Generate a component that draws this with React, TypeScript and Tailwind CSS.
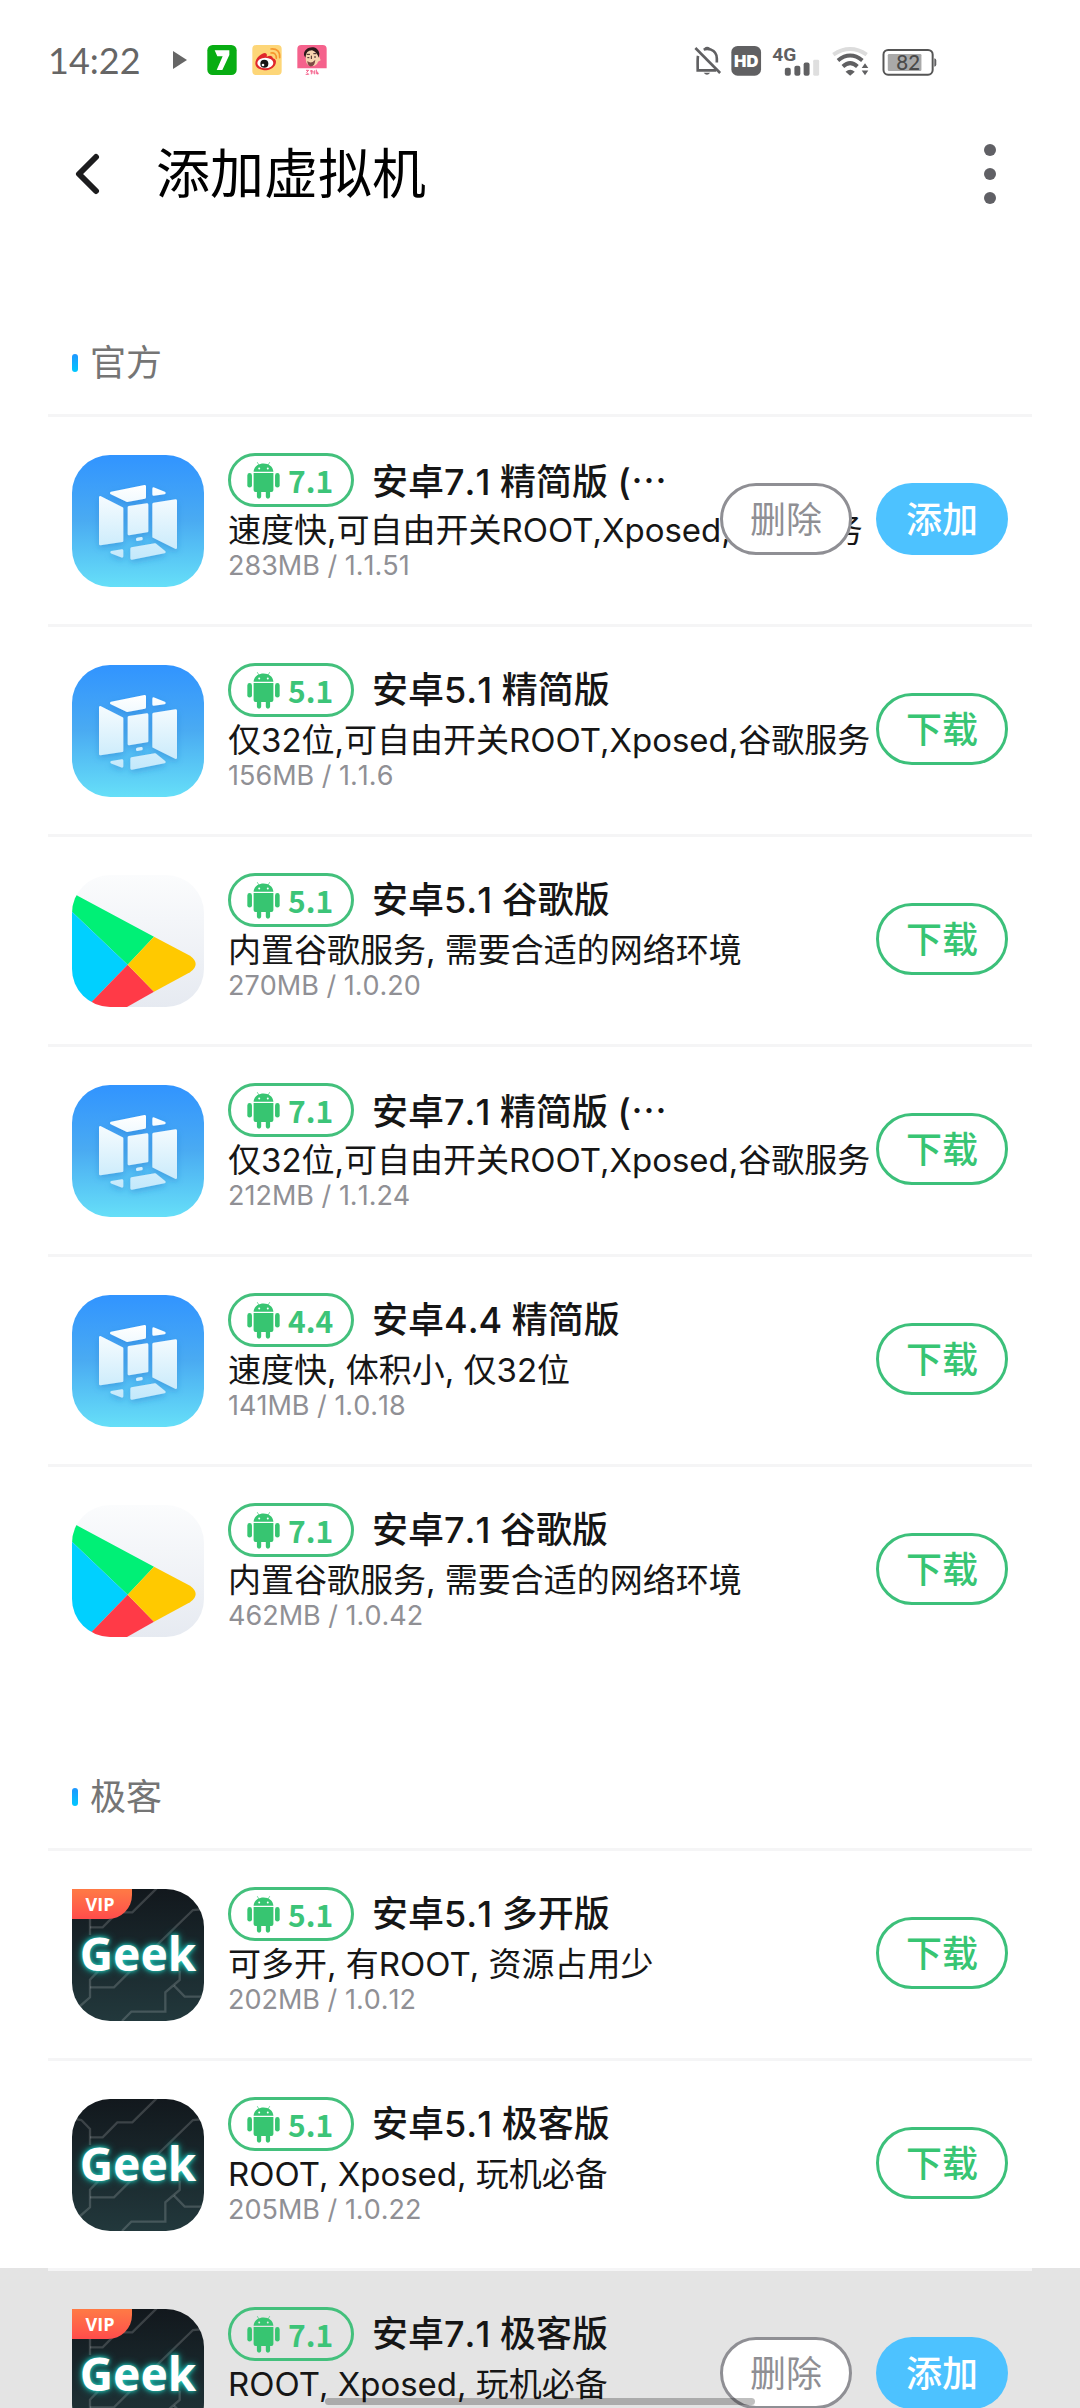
import React from "react";

type IconKind = "cube" | "play" | "geek" | "geekVip";

interface Image {
  icon: IconKind;
  version: string;
  title: string;
  clipped?: boolean;
  desc: string;
  meta?: string;
  installed?: boolean;
  pressed?: boolean;
}

const official: Image[] = [
  { icon: "cube", version: "7.1", title: "安卓7.1 精简版 (", clipped: true, desc: "速度快,可自由开关ROOT,Xposed,谷歌服务", meta: "283MB / 1.1.51", installed: true },
  { icon: "cube", version: "5.1", title: "安卓5.1 精简版", desc: "仅32位,可自由开关ROOT,Xposed,谷歌服务", meta: "156MB / 1.1.6" },
  { icon: "play", version: "5.1", title: "安卓5.1 谷歌版", desc: "内置谷歌服务, 需要合适的网络环境", meta: "270MB / 1.0.20" },
  { icon: "cube", version: "7.1", title: "安卓7.1 精简版 (", clipped: true, desc: "仅32位,可自由开关ROOT,Xposed,谷歌服务", meta: "212MB / 1.1.24" },
  { icon: "cube", version: "4.4", title: "安卓4.4 精简版", desc: "速度快, 体积小, 仅32位", meta: "141MB / 1.0.18" },
  { icon: "play", version: "7.1", title: "安卓7.1 谷歌版", desc: "内置谷歌服务, 需要合适的网络环境", meta: "462MB / 1.0.42" },
];

const geek: Image[] = [
  { icon: "geekVip", version: "5.1", title: "安卓5.1 多开版", desc: "可多开, 有ROOT, 资源占用少", meta: "202MB / 1.0.12" },
  { icon: "geek", version: "5.1", title: "安卓5.1 极客版", desc: "ROOT, Xposed, 玩机必备", meta: "205MB / 1.0.22" },
  { icon: "geekVip", version: "7.1", title: "安卓7.1 极客版", desc: "ROOT, Xposed, 玩机必备", installed: true, pressed: true },
];

function CubeIcon() {
  return (
    <svg viewBox="0 0 396 396" className="size-full" aria-hidden="true">
      <defs>
        <linearGradient id="cubeBg" x1="0" y1="0" x2="0" y2="1">
          <stop offset="0" stopColor="#3194ff" />
          <stop offset="0.5" stopColor="#4aabf2" />
          <stop offset="1" stopColor="#66dff8" />
        </linearGradient>
        <linearGradient id="cubeFace" gradientUnits="userSpaceOnUse" x1="0" y1="89" x2="0" y2="315">
          <stop offset="0" stopColor="#ffffff" />
          <stop offset="1" stopColor="#c2e8fb" />
        </linearGradient>
        <filter id="cubeShadow" x="-20%" y="-20%" width="140%" height="150%">
          <feDropShadow dx="0" dy="8" stdDeviation="10" floodColor="#2374c8" floodOpacity="0.4" />
        </filter>
      </defs>
      <rect width="396" height="396" fill="url(#cubeBg)" />
      <g fill="url(#cubeFace)" stroke="url(#cubeFace)" strokeWidth="8" strokeLinejoin="round" filter="url(#cubeShadow)">
        <path d="M118 114 218 94V127L165 137Z" />
        <path d="M245 101 277 114 245 118Z" />
        <path d="M85 127 150 160V257L85 267Z" />
        <path d="M171 157 225 149V228L171 237Z" />
        <path d="M245 147 311 137V278L245 245Z" />
        <path d="M196 252 208 250V252L196 254Z" />
        <path d="M179 281 249 269 277 291 179 310Z" />
        <path d="M119 292 150 287V304Z" />
      </g>
    </svg>
  );
}

function PlayIcon() {
  return (
    <svg viewBox="0 0 396 396" className="size-full" aria-hidden="true">
      <defs>
        <linearGradient id="playBg" x1="0" y1="0" x2="0" y2="1">
          <stop offset="0" stopColor="#fbfcfd" />
          <stop offset="1" stopColor="#e6eaf1" />
        </linearGradient>
      </defs>
      <rect width="396" height="396" fill="url(#playBg)" />
      <path d="M0 75Q6 54 18 63L246 185 167 269 0 110Z" fill="#00f076" />
      <path d="M0 110 167 269 56 384 40 396H0Z" fill="#00d0ff" />
      <path d="M167 269 246 350 165 396H44Z" fill="#ff3a47" />
      <path d="M246 185 354 242Q388 267 354 292L246 350 167 269Z" fill="#ffc900" />
    </svg>
  );
}

function GeekIcon({ vip }: { vip: boolean }) {
  return (
    <>
      <svg viewBox="0 0 396 396" className="size-full" aria-hidden="true">
        <defs>
          <linearGradient id="geekBg" x1="0" y1="0" x2="0" y2="1">
            <stop offset="0" stopColor="#12181d" />
            <stop offset="1" stopColor="#22383c" />
          </linearGradient>
        </defs>
        <rect width="396" height="396" fill="url(#geekBg)" />
        <g fill="none" stroke="#ffffff" strokeOpacity="0.17" strokeWidth="7">
          <path d="M254-2 181 70H136L92 115H54" />
          <path d="M0 58 28 63 54 90V138" />
          <path d="M80 245 54 272V325L14 360" />
          <path d="M54 295H126L180 241" />
          <path d="M396 60 363 63 250 173" />
          <path d="M323 245V273L280 310V368H178L150 396" />
          <path d="M306 290 338 323H396" />
        </g>
      </svg>
      <span className="absolute inset-0 flex items-center justify-center pb-1 font-['Noto_Sans'] text-[46px] leading-none font-bold text-white [text-shadow:0_0_4px_#1fd8c8,0_0_8px_#16a79c]">
        Geek
      </span>
      {vip && (
        <span className="absolute top-0 left-0 flex h-[30px] w-[60px] items-center justify-center rounded-br-[24px] bg-linear-to-b from-[#ff7a45] to-[#ff4b4b] pr-1 font-['Open_Sans'] text-[18px] leading-none font-bold text-white">
          VIP
        </span>
      )}
    </>
  );
}

function AppIcon({ kind }: { kind: IconKind }) {
  const vip = kind === "geekVip";
  return (
    <div className={`relative size-[132px] shrink-0 overflow-hidden ${vip ? "rounded-r-[38px] rounded-bl-[38px]" : "rounded-[38px]"}`}>
      {kind === "cube" && <CubeIcon />}
      {kind === "play" && <PlayIcon />}
      {(kind === "geek" || vip) && <GeekIcon vip={vip} />}
    </div>
  );
}

function AndroidGlyph() {
  return (
    <svg viewBox="0 0 100 114" className="h-[38px] w-[33px]" fill="#37c571" aria-hidden="true">
      <path d="M31 3 37 13M69 3 63 13" stroke="#37c571" strokeWidth="2" />
      <path fillRule="evenodd" d="M20 32C21 16 34 7 50 7S79 16 80 32ZM37 19a3 3 0 1 0 0 6 3 3 0 0 0 0-6ZM63 19a3 3 0 1 0 0 6 3 3 0 0 0 0-6Z" />
      <path d="M20 36H80V87Q80 93 74 93H70V107A6 6 0 0 1 57 107V93H43V107A6 6 0 0 1 30 107V93H26Q20 93 20 87Z" />
      <rect x="1" y="36" width="14" height="44" rx="7" />
      <rect x="85" y="36" width="14" height="44" rx="7" />
    </svg>
  );
}

function Row({ item }: { item: Image }) {
  return (
    <li className={item.pressed ? "bg-[#e4e4e4]" : "bg-white"}>
      <div className="mx-12 h-[3px] bg-[#f5f5f6]" />
      <div className="relative flex h-[207px] items-start gap-6 px-[72px] pt-[38px]">
        <AppIcon kind={item.icon} />
        <div className="-mt-0.5 min-w-0 flex-1">
          <div className="flex h-[54px] items-center gap-[18px]">
            <span className="flex h-[54px] w-[126px] shrink-0 items-center gap-2 rounded-full border-3 border-[#43c07c] pl-4 font-['Noto_Sans_CJK_SC',sans-serif] text-[30px] leading-none font-bold text-[#3cc478]">
              <AndroidGlyph />
              {item.version}
            </span>
            <h3 className="text-[36px] leading-[54px] font-medium whitespace-nowrap text-[#161616] [font-kerning:none]">
              {item.title}
              {item.clipped && <span className="font-['Noto_Sans_CJK_SC',sans-serif]">…</span>}
            </h3>
          </div>
          <p className="text-[33px] leading-[46px] whitespace-nowrap text-[#161616]">{item.desc}</p>
          {item.meta && <p className="text-[27px] leading-[26px] whitespace-nowrap text-[#909095] [font-kerning:none]">{item.meta}</p>}
        </div>
        <div className="absolute top-[66px] right-[72px] flex gap-6">
          {item.installed ? (
            <>
              <button className="h-[72px] w-[132px] rounded-full border-3 border-[#8f8f94] bg-white pt-0.5 text-[36px] leading-none text-[#8f8f94]">删除</button>
              <button className="h-[72px] w-[132px] rounded-full bg-[#4dc2ff] pt-0.5 text-[36px] leading-none font-medium text-white">添加</button>
            </>
          ) : (
            <button className="h-[72px] w-[132px] rounded-full border-3 border-[#3cc07a] bg-white pt-0.5 text-[36px] leading-none font-medium text-[#37c573]">下载</button>
          )}
        </div>
      </div>
    </li>
  );
}

function Section({ title, items }: { title: string; items: Image[] }) {
  return (
    <section>
      <div className="flex h-[174px] items-end gap-3 px-[72px] pb-[25px]">
        <span className="mb-[17px] h-[18px] w-1.5 rounded-full bg-linear-to-b from-[#1e96ff] to-[#00c8ff]" />
        <h2 className="text-[36px] leading-[52px] text-[#757575]">{title}</h2>
      </div>
      <ul>
        {items.map((item, i) => (
          <Row key={i} item={item} />
        ))}
      </ul>
    </section>
  );
}

function StatusBar() {
  return (
    <div className="flex h-[120px] items-center pl-12">
      <span className="w-[125px] font-['Lato'] text-[36px] leading-none text-[#666666]">14:22</span>
      <svg viewBox="0 0 14 18" className="h-[18px] w-3.5" fill="#666" aria-hidden="true">
        <path d="M0 0 14 9 0 18Z" />
      </svg>
      <svg viewBox="0 0 88 90" className="ml-5 size-[30px]" aria-hidden="true">
        <rect width="88" height="90" rx="16" fill="#08ad13" />
        <path d="M22 16H66V30L45 75H28L46 34H30Z" fill="#fff" />
      </svg>
      <svg viewBox="0 0 88 90" className="ml-[15px] size-[30px]" aria-hidden="true">
        <rect width="88" height="90" rx="12" fill="#fdd678" />
        <path d="M9 55C9 40 27 24 38 24Q46 26 43 35Q60 28 62 40Q74 44 70 56C64 74 42 77 32 75C18 73 9 66 9 55Z" fill="#e0272b" />
        <ellipse cx="39" cy="54" rx="24" ry="16" fill="#fff" />
        <circle cx="36" cy="56" r="12" fill="#151515" />
        <circle cx="32" cy="60" r="4" fill="#fff" />
        <path d="M56 24Q72 22 72 40M56 12Q84 10 82 38" fill="none" stroke="#f6962e" strokeWidth="5" strokeLinecap="round" />
      </svg>
      <svg viewBox="0 0 88 90" className="ml-[15px] size-[30px]" aria-hidden="true">
        <path d="M12 0H76Q88 0 88 12V70H0V12Q0 0 12 0Z" fill="#f5628c" />
        <path d="M24 26C24 8 62 4 64 30L70 46 62 50C58 68 28 68 26 48Z" fill="#f6d5b0" />
        <path d="M20 30C18 4 62-4 66 26L64 38Q58 20 44 16 26 16 24 38Z" fill="#2c1a1a" />
        <path d="M28 28H38M48 26H57M42 32V42M30 38H36M50 36H56" stroke="#3b2424" strokeWidth="3" />
        <path d="M30 48Q42 58 54 44Q52 66 38 64 30 60 30 48Z" fill="#7c4a44" />
        <path d="M26 76H34L28 82 34 88H25M42 75V88M38 78H47V86M52 76V88M57 74V86H64M61 80V88" fill="none" stroke="#f5628c" strokeWidth="3" />
      </svg>
      <svg viewBox="0 0 740 100" className="mr-[141px] ml-auto h-[33px] w-[245px]" fill="#606062" aria-label="静音 HD 4G WiFi 电量82%">
        <g fill="none" stroke="#606062" strokeWidth="8">
          <path d="M3 12 78 88" />
          <path d="M11 36C9 46 10 60 10 80H66" />
          <path d="M28 17Q38 13 50 17Q68 24 68 44V56" />
        </g>
        <path d="M30 12Q38 4 48 12V18H30ZM28 87H48Q38 100 28 87Z" />
        <rect x="112" y="6" width="90" height="90" rx="19" />
        <text x="157" y="69" textAnchor="middle" fill="#fff" fontSize="50" fontWeight="900" fontFamily="Inter">HD</text>
        <text x="236" y="51" fontSize="58" fontWeight="700" fontFamily="Roboto">4G</text>
        <rect x="274" y="72" width="18" height="24" rx="6" />
        <rect x="303" y="66" width="18" height="30" rx="6" />
        <rect x="331" y="56" width="18" height="40" rx="6" />
        <rect x="360" y="48" width="18" height="48" rx="4" fill="#dfdfdf" />
        <g fill="none" strokeWidth="12">
          <path d="M421 32Q472-2 522 32" stroke="#dcdcdc" />
          <path d="M435 50Q472 20 509 50" stroke="#606062" />
          <path d="M450 68Q472 48 494 68" stroke="#606062" />
        </g>
        <path d="M458 84Q472 72 486 84L472 96Z" />
        <path d="M507 73 517 58 527 73ZM507 80H527L517 95Z" />
        <rect x="573" y="18" width="149" height="75" rx="14" fill="none" stroke="#555" strokeWidth="6" />
        <rect x="586" y="30" width="102" height="52" rx="4" fill="#a9a9a9" />
        <text x="648" y="78" textAnchor="middle" fill="#4a4a4a" fontSize="62" fontFamily="Lato" fontWeight="500">82</text>
        <path d="M727 43Q733 44 733 50V62Q733 68 727 69Z" />
      </svg>
    </div>
  );
}

export default function App() {
  return (
    <main className="relative h-screen overflow-hidden bg-white font-['Inter','Noto_Sans_CJK_SC',sans-serif]">
      <StatusBar />
      <header className="flex h-[120px] items-start pr-[72px] pl-[75px]">
        <button aria-label="返回" className="mt-[33px] w-[81px]">
          <svg viewBox="0 0 26 42" className="h-[42px] w-[26px]" fill="none" stroke="#1c1c1e" strokeWidth="6" strokeLinecap="round" strokeLinejoin="round" aria-hidden="true">
            <path d="M21 4 4 21 21 38" />
          </svg>
        </button>
        <h1 className="flex-1 text-[54px] leading-[110px] text-black">添加虚拟机</h1>
        <button aria-label="更多" className="mt-6 mr-3 flex flex-col gap-3">
          <span className="size-3 rounded-full bg-[#606065]" />
          <span className="size-3 rounded-full bg-[#606065]" />
          <span className="size-3 rounded-full bg-[#606065]" />
        </button>
      </header>
      <Section title="官方" items={official} />
      <Section title="极客" items={geek} />
      <div className="absolute bottom-[3px] left-1/2 h-[7px] w-[430px] -translate-x-1/2 rounded-full bg-black/25" />
    </main>
  );
}
